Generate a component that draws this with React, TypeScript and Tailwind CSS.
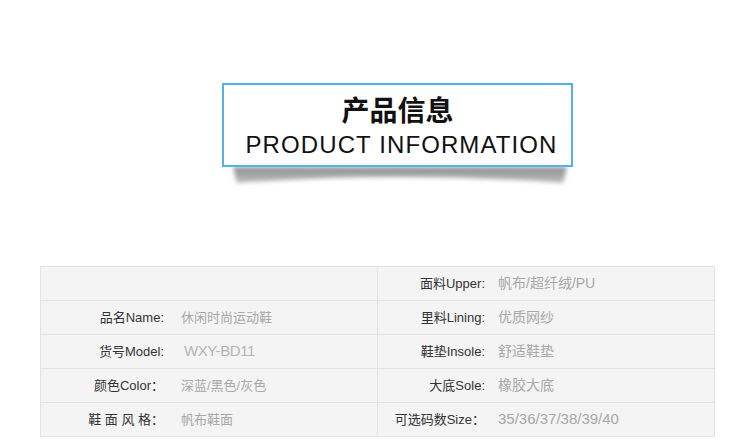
import React from 'react';

const font = "font-['Liberation_Sans','Noto_Sans_CJK_SC',sans-serif]";

interface Row {
    label: string;
    value: string;
    valueClass?: string;
}

const leftRows: Row[] = [
    { label: '', value: '' },
    { label: '品名Name:', value: '休闲时尚运动鞋', valueClass: 'text-[12.5px]' },
    { label: '货号Model:', value: 'WXY-BD11', valueClass: 'text-[15px] tracking-[-0.4px] text-[#b4b4b4] ml-[20px]' },
    { label: '颜色Color：', value: '深蓝/黑色/灰色', valueClass: 'text-[12.5px]' },
    { label: '鞋 面 风 格：', value: '帆布鞋面', valueClass: 'text-[12.5px]' },
];

const rightRows: Row[] = [
    { label: '面料Upper:', value: '帆布/超纤绒/PU', valueClass: 'text-[14px]' },
    { label: '里料Lining:', value: '优质网纱', valueClass: 'text-[14px]' },
    { label: '鞋垫Insole:', value: '舒适鞋垫', valueClass: 'text-[14px]' },
    { label: '大底Sole:', value: '橡胶大底', valueClass: 'text-[14px]' },
    { label: '可选码数Size：', value: '35/36/37/38/39/40', valueClass: 'text-[15px]' },
];

const Shadow: React.FC = () => (
    <svg width="342" height="22" viewBox="0 0 342 22" className="block ml-[7px]">
        <defs>
            <filter id="sb" x="-5%" y="-50%" width="110%" height="200%">
                <feGaussianBlur stdDeviation="2" />
            </filter>
            <linearGradient id="sg" x1="0" y1="0" x2="0" y2="1">
                <stop offset="0" stopColor="#8f8f8f" />
                <stop offset="1" stopColor="#bdbdbd" />
            </linearGradient>
        </defs>
        <path d="M4,0 L338,0 L334,16 Q171,4 8,16 Z" fill="url(#sg)" filter="url(#sb)" />
    </svg>
);

const Cell: React.FC<{ row: Row; labelW: string; gap: string }> = ({ row, labelW, gap }) => (
    <div className="h-[34px] flex items-center border-r border-b border-[#e2e2e2] bg-[#f4f4f4]">
        {row.label && (
            <>
                <span className={`${labelW} text-right text-[13px] text-[#333] whitespace-pre`}>{row.label}</span>
                <span className={`${gap} text-[13px] text-[#a8a8a8] ${row.valueClass ?? ''}`}>{row.value}</span>
            </>
        )}
    </div>
);

const App: React.FC = () => {
    return (
        <div className={`w-[750px] h-[448px] bg-white overflow-hidden ${font}`}>
            <div className="pt-[83px] pl-[222px]">
                <div className="w-[351px] h-[84px] border-2 border-[#53b0ec] bg-white flex flex-col items-center">
                    <h1 className="mt-[8px] text-[28px] leading-[32px] font-bold text-[#111] font-['Noto_Sans_CJK_SC',sans-serif]">
                        产品信息
                    </h1>
                    <p className="mt-[6px] ml-[8px] text-[24px] leading-[28px] tracking-[1.1px] text-[#111]">
                        PRODUCT INFORMATION
                    </p>
                </div>
                <Shadow />
            </div>
            <div className="mt-[77px] ml-[40px] w-[675px] grid grid-cols-2 border-l border-t border-[#e2e2e2]">
                {leftRows.map((row, i) => (
                    <React.Fragment key={i}>
                        <Cell row={row} labelW="w-[123px]" gap="ml-[17px]" />
                        <Cell row={rightRows[i]} labelW="w-[107px]" gap="ml-[13px]" />
                    </React.Fragment>
                ))}
            </div>
        </div>
    );
};

export default App;
